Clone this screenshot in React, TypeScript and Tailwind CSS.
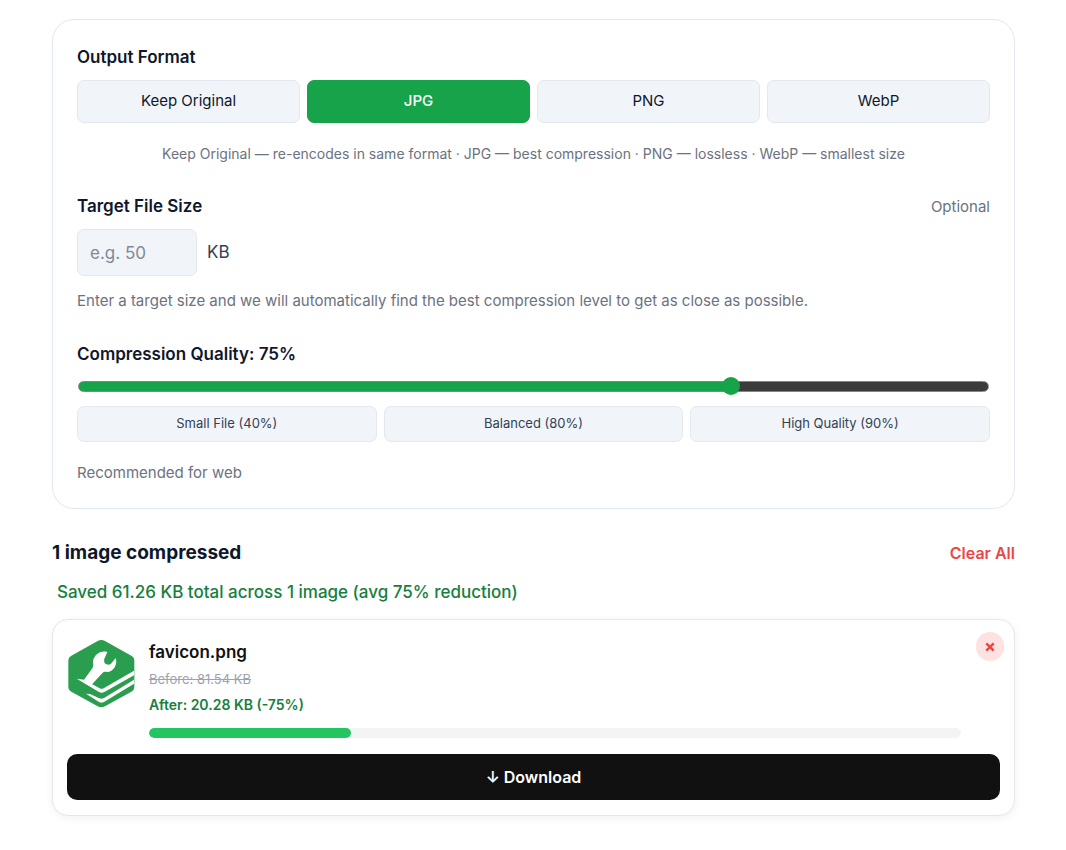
import React, { useState } from 'react';

type Format = 'Keep Original' | 'JPG' | 'PNG' | 'WebP';

const FORMATS: Format[] = ['Keep Original', 'JPG', 'PNG', 'WebP'];

const PRESETS = [
  { label: 'Small File', value: 40 },
  { label: 'Balanced', value: 80 },
  { label: 'High Quality', value: 90 },
];

const MIN_QUALITY = 10;
const MAX_QUALITY = 100;

const Favicon: React.FC = () => (
  <svg viewBox="0 0 210 210" className="size-[70px] shrink-0" role="img" aria-label="favicon.png">
    <path
      d="M92 6q11-6 22 0l79 44q9 5 9 15v78q0 10-9 15l-79 44q-11 6-22 0l-79-44q-9-5-9-15V65q0-10 9-15z"
      fill="#2a9d4e"
    />
    {/* Wrench */}
    <path
      d="M121 39c-21-6-42 10-43 30 0 7 2 13-2 19l-26 36 24 13 33-36c4-4 8-3 13-2 19 0 33-22 26-42l-14 17c-4 4-9 4-14 2-6-3-8-9-6-17z"
      fill="#fff"
    />
    {/* Layers */}
    <path d="M29 119l22 3 47 26q6 3 12 0l91-53v14l-89 50q-8 5-16 0z" fill="#fff" />
    <path d="M57 164l12 1 28 13q7 3 14-1l90-55v12l-89 54q-8 5-16 1z" fill="#fff" />
  </svg>
);

const App: React.FC = () => {
  const [format, setFormat] = useState<Format>('JPG');
  const [quality, setQuality] = useState(75);
  const [target, setTarget] = useState('');

  const fill = (quality - MIN_QUALITY) / (MAX_QUALITY - MIN_QUALITY);

  return (
    <main className="pt-[19px] pb-8 pl-[52px] pr-[51px] bg-white font-['Inter',sans-serif] text-[#0f172a]">
      {/* Settings */}
      <section className="border border-[#e2e8f0] rounded-[22px] p-6">
        <h2 className="text-[17px] leading-[26px] font-semibold">Output Format</h2>
        <div className="mt-2.5 grid grid-cols-4 gap-[7px]">
          {FORMATS.map(f => (
            <button
              key={f}
              onClick={() => setFormat(f)}
              className={`h-[43px] rounded-[7px] border text-[15px] ${format === f ? 'bg-[#16a34a] border-[#16a34a] text-white font-medium' : 'bg-[#f1f5f9] border-[#e2e8f0]'}`}
            >
              {f}
            </button>
          ))}
        </div>
        <p className="mt-5 text-center text-[14px] leading-[22px] text-[#6b7280]">
          Keep Original — re-encodes in same format · JPG — best compression · PNG — lossless · WebP — smallest size
        </p>

        <div className="mt-7 flex items-baseline justify-between">
          <label htmlFor="target" className="text-[17px] leading-[26px] font-semibold">Target File Size</label>
          <span className="text-[15px] leading-[22px] text-[#6b7280]">Optional</span>
        </div>
        <div className="mt-2.5 flex items-center gap-2.5">
          <input
            id="target"
            type="text"
            placeholder="e.g. 50"
            value={target}
            onChange={e => setTarget(e.target.value)}
            className="w-[120px] h-[47px] px-3 rounded-[7px] border border-[#e2e8f0] bg-[#f1f5f9] text-[17px] placeholder:text-[#808997]"
          />
          <span className="text-[17px] text-[#334155]">KB</span>
        </div>
        <p className="mt-3.5 text-[15px] leading-[22px] text-[#6b7280]">
          Enter a target size and we will automatically find the best compression level to get as close as possible.
        </p>

        <label htmlFor="quality" className="mt-[29px] block text-[17px] leading-[26px] font-semibold">
          Compression Quality: {quality}%
        </label>
        <input
          id="quality"
          type="range"
          min={MIN_QUALITY}
          max={MAX_QUALITY}
          value={quality}
          onChange={e => setQuality(Number(e.target.value))}
          style={{ '--fill': `${fill * 100}%` } as React.CSSProperties}
          className="mt-2.5 block w-full h-[18px] px-px appearance-none bg-transparent [&::-webkit-slider-runnable-track]:h-[11px] [&::-webkit-slider-runnable-track]:rounded-full [&::-webkit-slider-runnable-track]:border [&::-webkit-slider-runnable-track]:border-[#858585] [&::-webkit-slider-runnable-track]:bg-[linear-gradient(to_right,#16a34a_var(--fill),#3b3b3b_var(--fill))] [&::-webkit-slider-thumb]:appearance-none [&::-webkit-slider-thumb]:size-[18px] [&::-webkit-slider-thumb]:-mt-[5px] [&::-webkit-slider-thumb]:rounded-full [&::-webkit-slider-thumb]:bg-[#16a34a]"
        />
        <div className="mt-[11px] grid grid-cols-3 gap-[7px]">
          {PRESETS.map(p => (
            <button
              key={p.value}
              onClick={() => setQuality(p.value)}
              className="h-9 rounded-[7px] border border-[#e2e8f0] bg-[#f1f5f9] text-[13px] text-[#334155]"
            >
              {p.label} ({p.value}%)
            </button>
          ))}
        </div>
        <p className="mt-5 text-[15px] leading-[22px] text-[#6b7280]">Recommended for web</p>
      </section>

      {/* Results */}
      <div className="mt-7 flex items-center justify-between">
        <h2 className="text-[19px] leading-8 font-bold">1 image compressed</h2>
        <button className="text-[16px] font-semibold text-[#ef4444]">Clear All</button>
      </div>
      <p className="mt-2.5 px-[5px] text-[17px] leading-[26px] font-medium text-[#15803d]">
        Saved 61.26 KB total across 1 image (avg 75% reduction)
      </p>

      <article className="relative mt-3.5 p-3.5 pb-[15px] bg-white border border-[#e5e7eb] rounded-[16px] shadow-[0_2px_9px_rgba(0,0,0,0.06)]">
        <div className="flex gap-3 pt-[5px] pr-[39px]">
          <Favicon />
          <div className="flex-1 min-w-0">
            <h3 className="text-[17px] leading-[26px] font-semibold text-[#111]">favicon.png</h3>
            <p className="mt-[3px] text-[13px] leading-[22px] text-[#9ca3af] line-through">Before: 81.54 KB</p>
            <p className="mt-1 text-[14px] leading-[22px] font-semibold text-[#15803d]">After: 20.28 KB (-75%)</p>
            <div className="mt-3 h-2.5 rounded-full bg-[#f3f4f6] overflow-hidden">
              <div className="h-full rounded-full bg-[#22c55e]" style={{ width: '24.87%' }} />
            </div>
          </div>
        </div>
        <button className="mt-4 block w-full h-[46px] rounded-[10px] bg-[#111] text-[16px] font-semibold text-white">
          ↓ Download
        </button>
        <button
          aria-label="Remove favicon.png"
          className="absolute top-3 right-2.5 w-7 h-[29px] flex items-center justify-center rounded-full bg-[#fee2e2] text-[#ef4444]"
        >
          <svg viewBox="0 0 10 10" className="size-2.5" stroke="currentColor" strokeWidth="2.4">
            <path d="M1.3 1.3l7.4 7.4M8.7 1.3L1.3 8.7" />
          </svg>
        </button>
      </article>
    </main>
  );
};

export default App;
